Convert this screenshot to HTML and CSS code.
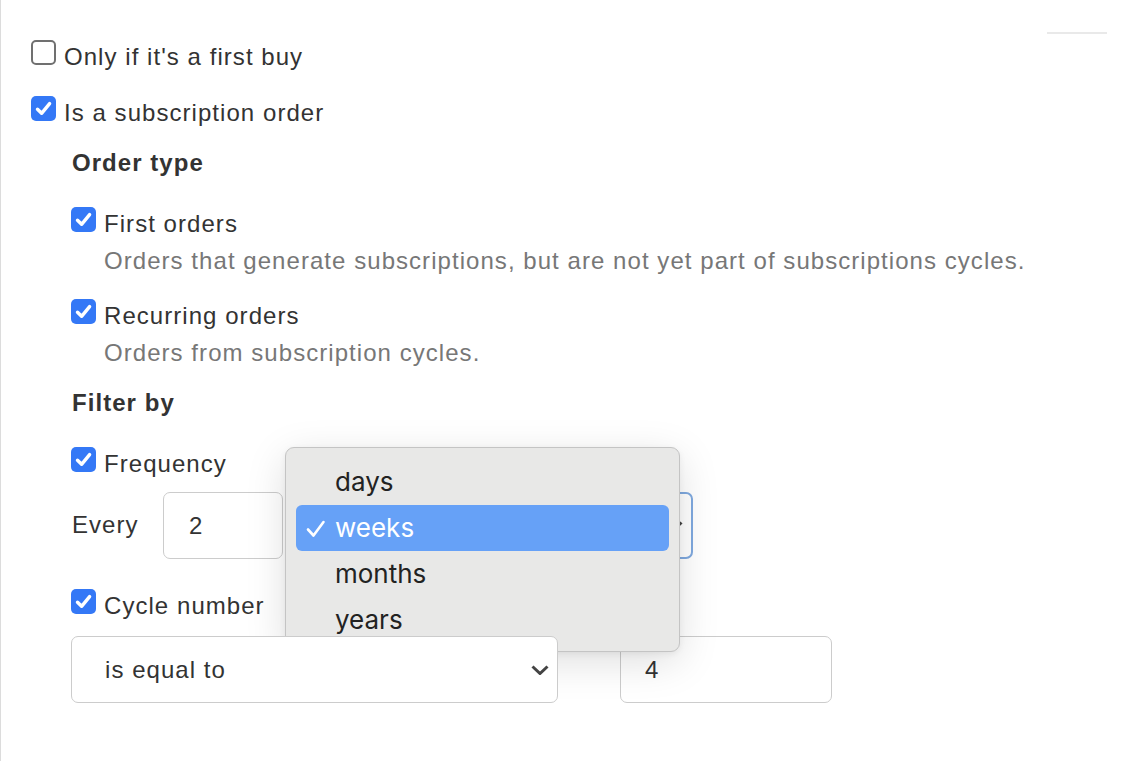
FILE: index.html
```html
<!DOCTYPE html>
<html lang="en">
<head>
<meta charset="utf-8">
<title>Subscription filter</title>
<link rel="stylesheet" href="styles.css">
</head>
<body>
<div class="page">
  <div class="top-row"><span class="top-line"></span></div>
  <div class="form">
    <label class="check-row row-first">
      <span class="cb"></span>
      <span class="lbl">Only if it's a first buy</span>
    </label>
    <label class="check-row row-sub">
      <span class="cb on"><svg viewBox="0 0 25 25"><path d="M6.5 13.2 L10.6 17.3 L18.6 7.6" /></svg></span>
      <span class="lbl">Is a subscription order</span>
    </label>

    <div class="sub">
      <div class="heading h-order">Order type</div>

      <label class="check-row row-fo">
        <span class="cb on"><svg viewBox="0 0 25 25"><path d="M6.5 13.2 L10.6 17.3 L18.6 7.6" /></svg></span>
        <span class="lbl">First orders</span>
      </label>
      <div class="desc d1">Orders that generate subscriptions, but are not yet part of subscriptions cycles.</div>

      <label class="check-row row-ro">
        <span class="cb on"><svg viewBox="0 0 25 25"><path d="M6.5 13.2 L10.6 17.3 L18.6 7.6" /></svg></span>
        <span class="lbl">Recurring orders</span>
      </label>
      <div class="desc d2">Orders from subscription cycles.</div>

      <div class="heading h-filter">Filter by</div>

      <div class="freq-block">
        <label class="check-row">
          <span class="cb on"><svg viewBox="0 0 25 25"><path d="M6.5 13.2 L10.6 17.3 L18.6 7.6" /></svg></span>
          <span class="lbl">Frequency</span>
        </label>
        <div class="every-row">
          <span class="every">Every</span>
          <div class="field num">2</div>
          <div class="field select focus">
            <span class="sel-text"></span>
            <svg class="chev" viewBox="0 0 18 10"><path d="M1.5 1.5 L9 8.5 L16.5 1.5" /></svg>
          </div>
        </div>

        <div class="popup">
          <div class="opt">days</div>
          <div class="opt sel"><svg class="tick" viewBox="0 0 20 18"><path d="M2 9.5 L7.5 15.5 L17.5 2" /></svg>weeks</div>
          <div class="opt">months</div>
          <div class="opt">years</div>
        </div>
      </div>

      <label class="check-row row-cycle">
        <span class="cb on"><svg viewBox="0 0 25 25"><path d="M6.5 13.2 L10.6 17.3 L18.6 7.6" /></svg></span>
        <span class="lbl">Cycle number</span>
      </label>
      <div class="cycle-row">
        <div class="field select wide">
          <span class="sel-text">is equal to</span>
          <svg class="chev" viewBox="0 0 18 10"><path d="M1.5 1.5 L9 8.5 L16.5 1.5" /></svg>
        </div>
        <div class="field num4">4</div>
      </div>
    </div>
  </div>
</div>
</body>
</html>
```

FILE: styles.css
```css
* { box-sizing: border-box; }

html, body {
  margin: 0;
  padding: 0;
  background: #ffffff;
}

body {
  font-family: "Liberation Sans", Arial, Helvetica, sans-serif;
  color: #333333;
  font-size: 24px;
  letter-spacing: 1.05px;
}

.page {
  width: 1136px;
  height: 761px;
  border-left: 1px solid #dcdcdc;
  padding-top: 32px;
  overflow: hidden;
}

.top-row {
  display: flex;
  justify-content: flex-end;
  padding-right: 29px;
  height: 2px;
}

.top-line {
  width: 60px;
  height: 2px;
  background: #e9e9e9;
}

.form {
  padding-left: 30px;
}

.check-row {
  display: flex;
  align-items: flex-start;
  gap: 8px;
}

.cb {
  flex: none;
  width: 25px;
  height: 25px;
  border: 2px solid #707070;
  border-radius: 5px;
  background: #fff;
  display: flex;
}

.cb.on {
  border: none;
  background: #3478f6;
}

.cb svg {
  width: 25px;
  height: 25px;
}

.cb svg path {
  fill: none;
  stroke: #ffffff;
  stroke-width: 3.4;
  stroke-linecap: round;
  stroke-linejoin: round;
}

.lbl {
  line-height: 25px;
  padding-top: 4px;
  white-space: nowrap;
}

.row-first { margin-top: 6px; }
.row-sub { margin-top: 27px; }

.sub {
  padding-left: 40px;
}

.heading {
  font-weight: bold;
  line-height: 25px;
  padding-left: 1px;
}

.h-order { margin-top: 25px; }
.row-fo { margin-top: 32px; }

.desc {
  color: #777777;
  line-height: 25px;
  padding-left: 33px;
  margin-top: 12px;
  white-space: nowrap;
}

.row-ro { margin-top: 26px; }

.h-filter { margin-top: 25px; }

.freq-block {
  position: relative;
  margin-top: 32px;
}

.every-row {
  display: flex;
  align-items: center;
  margin-top: 16px;
}

.every {
  width: 92px;
  padding-left: 1px;
  padding-bottom: 2px;
}

.field {
  height: 67px;
  border: 1.5px solid #cccccc;
  border-radius: 7px;
  background: #fff;
  display: flex;
  align-items: center;
}

.num {
  width: 120px;
  padding-left: 25px;
}

.select {
  position: relative;
  padding-left: 33px;
  padding-right: 8px;
  justify-content: space-between;
}

.select.focus {
  margin-left: 10px;
  width: 400px;
  border: 2px solid #7fa9df;
}

.chev {
  width: 18px;
  height: 10px;
}

.chev path {
  fill: none;
  stroke: #444444;
  stroke-width: 3;
}

.row-cycle { margin-top: 30px; }

.cycle-row {
  display: flex;
  gap: 62px;
  margin-top: 18px;
}

.wide {
  width: 487px;
}

.num4 {
  width: 212px;
  padding-left: 24px;
}

.popup {
  position: absolute;
  left: 214px;
  top: 0;
  width: 395px;
  height: 205px;
  background: #e8e8e7;
  border: 1px solid #c4c4c4;
  border-radius: 9px;
  padding: 11px 10px 10px;
  box-shadow: 0 10px 40px rgba(0, 0, 0, 0.13), 0 2px 6px rgba(0, 0, 0, 0.06);
  font-family: "Inter", "Liberation Sans", sans-serif;
  font-size: 26px;
  letter-spacing: 0;
  color: #222222;
}

.opt {
  height: 46px;
  line-height: 46px;
  padding-left: 39px;
  border-radius: 6px;
  position: relative;
}

.opt.sel {
  background: #66a1f7;
  color: #ffffff;
}

.tick {
  position: absolute;
  left: 10px;
  top: 15px;
  width: 20px;
  height: 18px;
}

.tick path {
  fill: none;
  stroke: #ffffff;
  stroke-width: 2.6;
  stroke-linecap: round;
  stroke-linejoin: round;
}
```
